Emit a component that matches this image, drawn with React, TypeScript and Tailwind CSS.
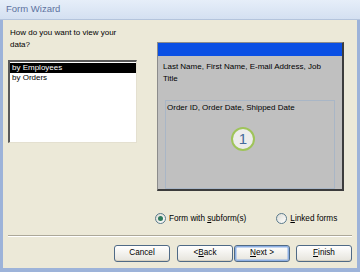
import React from 'react';

const font = { fontFamily: '"Liberation Sans", Arial, sans-serif' };

interface RadioProps {
  checked?: boolean;
  children: React.ReactNode;
}

const Radio = ({ checked, children }: RadioProps) => (
  <div className="flex items-center gap-[3px]">
    <span className="w-[11px] h-[11px] rounded-full border border-[#5a7a8c] bg-gradient-to-br from-[#dcdcd4] to-white flex items-center justify-center">
      {checked && <span className="w-[5px] h-[5px] rounded-full bg-[#2f7a5c]" />}
    </span>
    <span className="text-[8.2px] text-black leading-[11px]">{children}</span>
  </div>
);

interface ButtonProps {
  children: React.ReactNode;
  primary?: boolean;
}

const WizButton = ({ children, primary }: ButtonProps) => (
  <button
    className={`w-[56px] h-[17px] rounded-[3px] border border-[#4f6a86] bg-gradient-to-b from-white to-[#e6e4dc] text-[8.2px] text-black leading-none flex items-center justify-center ${
      primary ? 'shadow-[inset_0_0_0_1.5px_#8eb0e4]' : 'shadow-[inset_0_-1px_0_#d6d0c0]'
    }`}
  >
    {children}
  </button>
);

const App = () => {
  return (
    <div className="w-[360px] h-[272px] flex flex-col bg-[#9db3d9] overflow-hidden" style={font}>
      {/* title bar */}
      <div className="h-[20px] flex items-center pl-[6px] bg-gradient-to-b from-[#e6eef9] to-[#d4e0f1] border-b border-[#b4c4dc]">
        <span className="text-[9.5px] text-[#5d72a0]">Form Wizard</span>
      </div>

      <div className="flex-1 mx-[3px] mb-[4px] bg-[#ece9d8] flex flex-col px-[5px]">
        <div className="flex">
          {/* left column */}
          <div className="w-[129px] flex flex-col pt-[7px]">
            <p className="text-[8px] leading-[12px] text-black pl-[2px]">
              How do you want to view your
              <br />
              data?
            </p>
            <div className="mt-[9px] h-[83px] bg-white border-t-2 border-l-2 border-t-[#5a5a5a] border-l-[#5a5a5a] border-r border-b border-r-[#e4e0d0] border-b-[#e4e0d0] pt-px text-[8px] leading-[10px]">
              <div className="bg-black text-white pl-[2px]">by Employees</div>
              <div className="text-black pl-[2px]">by Orders</div>
            </div>
          </div>

          {/* preview panel */}
          <div className="ml-[20px] mt-[22px] w-[187px] h-[149px] bg-[#c0c0c0] border border-[#8c8c8c] border-r-2 border-b-2 border-r-[#3c3c3c] border-b-[#3c3c3c] flex flex-col">
            <div className="h-[13px] bg-[#0a4fe4]" />
            <p className="px-[5px] pt-[5px] text-[8px] leading-[12px] text-black">
              Last Name, First Name, E-mail Address, Job
              <br />
              Title
            </p>
            <div className="mx-[7px] mt-[15px] h-[89px] border border-[#a9b6c6] flex flex-col">
              <div className="px-[1px] pt-px text-[8px] leading-[11px] text-black">Order ID, Order Date, Shipped Date</div>
              <div className="flex-1 flex items-center justify-center pb-[24px] pr-[14px]">
                <span className="w-[24px] h-[24px] rounded-full border-2 border-[#9fc45a] bg-[#ececec] flex items-center justify-center text-[15px] leading-none text-[#456a9c]">
                  1
                </span>
              </div>
            </div>
          </div>
        </div>

        {/* radio row */}
        <div className="flex mt-[22px] pl-[147px]">
          <Radio checked>
            Form with <u>s</u>ubform(s)
          </Radio>
          <div className="ml-[30px]">
            <Radio>
              <u>L</u>inked forms
            </Radio>
          </div>
        </div>

        {/* separator */}
        <div className="mt-[11px] border-t border-[#aca899] border-b border-b-white" />

        {/* buttons */}
        <div className="flex mt-[8px] pl-[106px]">
          <WizButton>Cancel</WizButton>
          <div className="ml-[7px]">
            <WizButton>
              &lt; <u>B</u>ack
            </WizButton>
          </div>
          <div className="ml-px">
            <WizButton primary>
              <u>N</u>ext &gt;
            </WizButton>
          </div>
          <div className="ml-[6px]">
            <WizButton>
              <u>F</u>inish
            </WizButton>
          </div>
        </div>
      </div>
    </div>
  );
};

export default App;
